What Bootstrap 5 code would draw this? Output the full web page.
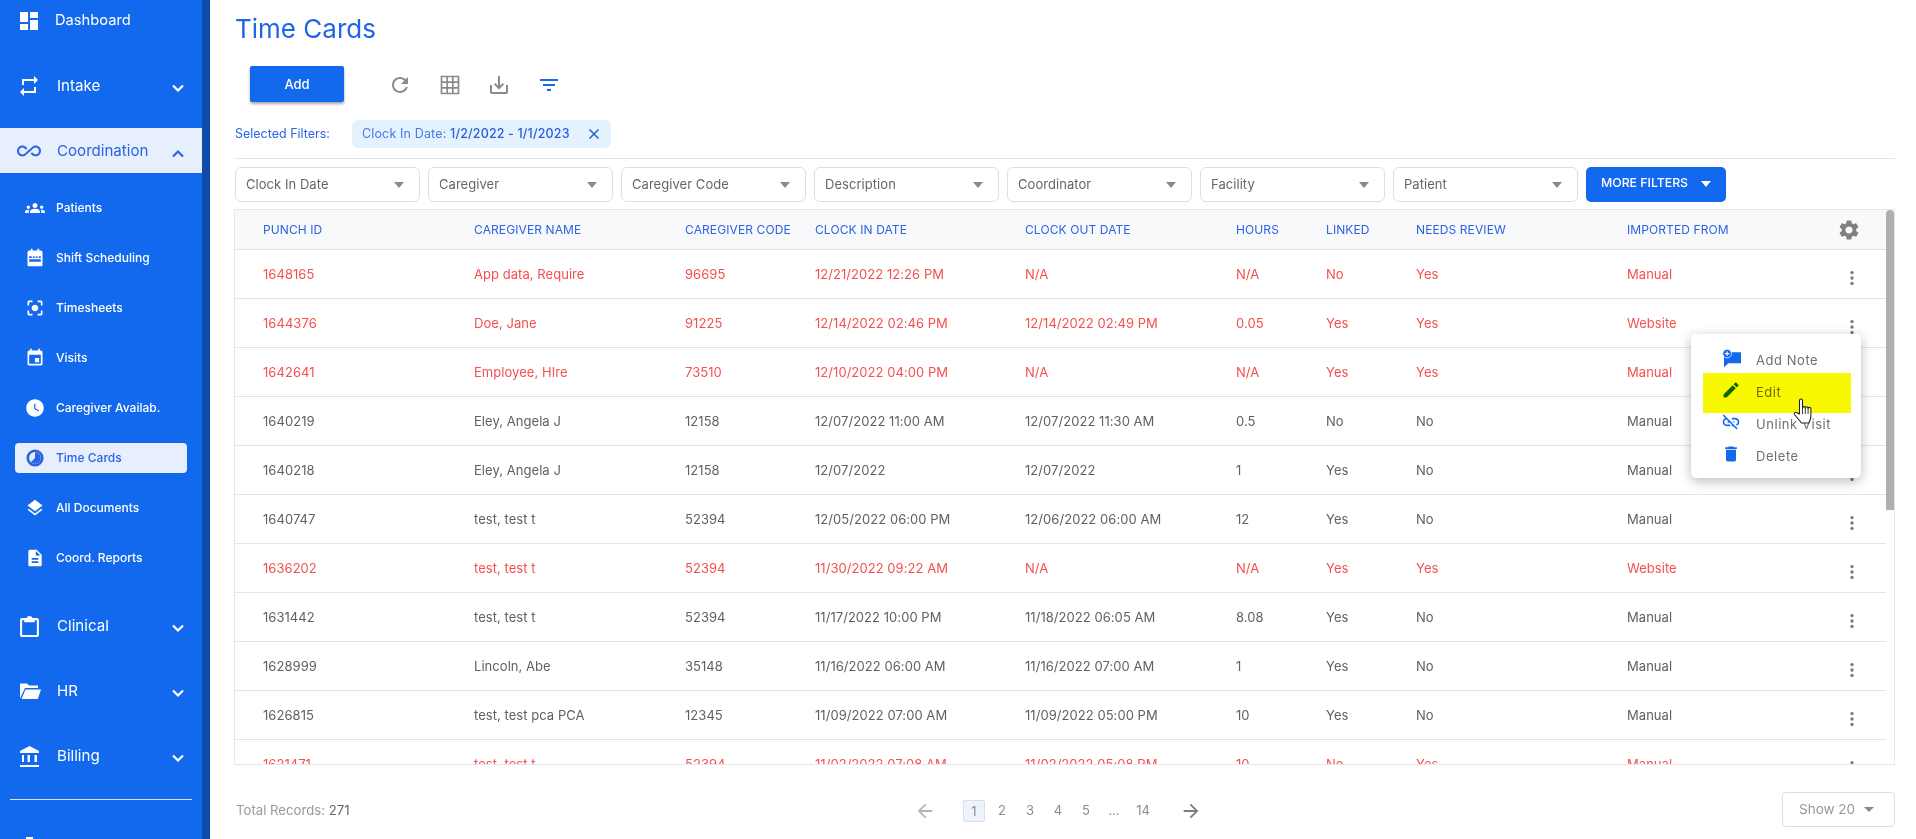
<!DOCTYPE html>
<html lang="en">
<head>
<meta charset="utf-8">
<title>Time Cards</title>
<link href="https://cdn.jsdelivr.net/npm/bootstrap@5.3.0/dist/css/bootstrap.min.css" rel="stylesheet">
<style>
html,body{height:839px;overflow:hidden}
body{font-family:Inter,"Liberation Sans",sans-serif;background:#fff;color:#616161;font-size:13px}
svg{display:block;fill:currentColor}
.side{width:210px;height:839px;flex:none;background:#1269ee;border-right:8px solid #0e4cab;color:#fff;overflow:hidden}
.top-item{height:44px;margin-bottom:21px;display:flex;align-items:center;font-size:15.1px;padding-left:20px;position:relative}
.top-item.dash{height:42px;margin-bottom:22px;font-size:14.7px}
.top-item .lbl{position:absolute;left:57px}
.top-item.dash .lbl{left:55px;margin-top:-1px}
.top-item.on{background:#e7effc;color:#2a63e6;height:45px;margin-top:-1px}
.top-item.on .lbl{margin-top:1px}
.top-item .chev{position:absolute;left:171px;top:17px;width:14px;height:14px;fill:none;stroke:currentColor;stroke-width:2.2}
.top-item.on .chev{top:19px}
.sub-list{margin:-11px 0 21px}
.sub-item{height:50px;display:flex;align-items:center;position:relative;font-size:12px;font-weight:500}
.sub-item .lbl{position:absolute;left:56px}
.sub-item svg{position:absolute;left:25px;width:20px;height:20px}
.sub-item.cur::before{content:"";position:absolute;left:15px;width:172px;top:10px;height:30px;background:#e7effc;border-radius:4px}
.sub-item.cur{color:#2a63e6}
.sub-item.cur svg,.sub-item.cur .lbl{z-index:1}
.side-rule{margin:0 10px;border-top:1px solid #d7e2f8;height:38px}
.tail-ico{margin-left:19px}
.main{flex:1;min-width:0;padding:0 21px 0 25px}
.page-title{height:58px;margin:0;line-height:58px;font-size:26px;font-weight:400;color:#1d66e8}
.tool-row{margin-top:8px;height:36px;padding-left:15px}
.add-btn{width:94px;height:36px;background:#1269ee;border:0;border-radius:2px;color:#fff;font-size:13px;font-weight:500;box-shadow:0 2px 3px rgba(0,0,0,.35);padding:2px 0 0}
.tool-ico{width:24px;height:24px;color:#8b8b8b}
.tool-ico.live{color:#1d66e8}
.tool-set{gap:25.5px;margin:2px 0 0 44px}
.filter-line{margin-top:18px;height:28px}
.filter-name{color:#2a63e6;font-size:12.5px;width:117px}
.chip{height:28px;width:259px;background:#e3f2fd;border-radius:6px;padding:0 11px 0 10px;color:#4b78e4;font-size:12.5px;letter-spacing:.15px}
.chip b{font-weight:500;color:#2a5fd8}
.rule-line{margin-top:10px;border-top:1px solid #e4e4e4}
.filters{margin-top:8px;gap:8px}
.pick{width:185px;height:35px;border:1px solid #dedede;border-radius:6px;padding:1px 15px 0 10px;color:#666;font-size:13px;letter-spacing:.05px}
.tri{width:0;height:0;border-left:5px solid transparent;border-right:5px solid transparent;border-top:6px solid #8a8a8a}
.more-btn{width:140px;height:35px;background:#1269ee;border-radius:5px;color:#fff;font-size:12.3px;font-weight:500;padding:0 15px 2px 15px}
.more-btn .tri{border-top-color:#fff}
.grid-box{margin-top:7px;height:556px;border:1px solid #e7e7e7;position:relative;overflow:hidden;margin-left:-1px}
.grid-table{table-layout:fixed;width:1651px;border-collapse:separate;border-spacing:0;margin:0}
.grid-table th{height:40px;background:#f8f9fb;color:#2d62e3;font-size:12px;font-weight:400;letter-spacing:.1px;border-bottom:1px solid #e2e2e2;padding:0;vertical-align:middle;text-transform:uppercase}
.grid-table td{height:49px;border-bottom:1px solid #e4e4e4;padding:2px 0 0;font-size:13px;letter-spacing:.05px;color:#616161;vertical-align:middle;background:#fff}
.grid-table tr.alert-row td{color:#f64f4f}
.grid-table th:first-child,.grid-table td:first-child{padding-left:28px}
.grid-table .act svg{width:20px;height:20px;color:#77797d;margin:6px 0 0 25px}
.grid-table td.act{color:#77797d}
.grid-table th.act svg{width:24px;height:24px;color:#808080;margin:0 0 0 20px}
.thumb{position:absolute;top:0;right:0;width:8px;height:300px;background:#b0b0b0;border-radius:5px 5px 0 0}
.pop{position:absolute;left:1691px;top:334px;width:170px;height:144px;background:#fff;border-radius:5px;box-shadow:0 3px 12px rgba(0,0,0,.28);padding:10px 0 10px;z-index:3}
.pop-item{height:32px;display:flex;align-items:center;position:relative;color:#6f6f6f;font-size:13px;letter-spacing:.55px;padding:2px 0 0 65px}
.pop-item svg{position:absolute;left:30px;top:4px;width:20px;height:20px;color:#1269ee}
.pop-item svg.note{left:31px;top:5px;width:19px;height:19px}
.mark-on{position:absolute;left:1703px;top:373px;width:148px;height:40px;background:#f8f800;mix-blend-mode:multiply;z-index:4}
.hand{position:absolute;left:1792px;top:397px;width:24px;height:28px;z-index:5}
.foot{margin-top:27px;height:35px;display:grid;grid-template-columns:679px 1fr auto;align-items:center}
.total{color:#9a9a9a;font-size:13.2px;padding:2px 0 0 1px}
.total b{font-weight:400;color:#666}
.pager{color:#8d8d8d;font-size:13px;padding-top:2px}
.pg{width:28px;text-align:center}
.pg-wide{width:30px;text-align:center}
.pg-on{width:22px;height:22px;margin:0 3px 0 0;background:#eef2fb;border:1px solid #d5ddf0;border-radius:2px;line-height:20px;text-align:center;color:#8d8d8d;font-size:13px}
.arr-l{color:#b5b5b5;margin-right:27px}
.arr-r{color:#7c7c7c;margin-left:22px}
.show{width:113px;height:35px;border:1px solid #dedede;border-radius:4px;color:#999;font-size:13.5px;padding:0 20px 0 16px}
.show .tri{border-left-width:5px;border-right-width:5px;border-top-width:5px}
</style>
</head>
<body>
<div class="d-flex position-relative">
  <nav class="side">
    <div class="top-item dash"><svg width="18" height="18" viewBox="3 3 18 18"><path d="M3 13h8V3H3v10zm0 8h8v-6H3v6zm10 0h8V11h-8v10zm0-18v6h8V3h-8z"/></svg><span class="lbl">Dashboard</span></div>
    <div class="top-item"><svg width="20" height="22" viewBox="3 1 18 22" style="margin-left:-1px"><path d="M7 7h10v3l4-4-4-4v3H5v6h2V7zm10 10H7v-3l-4 4 4 4v-3h12v-6h-2v4z"/></svg><span class="lbl">Intake</span><svg class="chev" viewBox="0 0 14 14"><path d="M2 4.5l5 5 5-5"/></svg></div>
    <div class="top-item on"><svg width="24" height="24" viewBox="0 0 24 24" style="margin-left:-3px"><path d="M18.6 6.62c-1.44 0-2.8.56-3.77 1.53L12 10.66 10.48 12h.01L7.8 14.39c-.64.64-1.49.99-2.4.99-1.87 0-3.39-1.51-3.39-3.38S3.53 8.62 5.4 8.62c.91 0 1.76.35 2.44 1.03l1.13 1 1.51-1.34L9.22 8.2C8.2 7.18 6.84 6.62 5.4 6.62 2.42 6.62 0 9.04 0 12s2.42 5.38 5.4 5.38c1.44 0 2.8-.56 3.77-1.53l2.83-2.5.01.01L13.52 12h-.01l2.69-2.39c.64-.64 1.49-.99 2.4-.99 1.87 0 3.39 1.51 3.39 3.38s-1.52 3.38-3.39 3.38c-.9 0-1.76-.35-2.44-1.03l-1.14-1.01-1.51 1.34 1.27 1.12c1.02 1.01 2.37 1.57 3.82 1.57 2.98 0 5.4-2.41 5.4-5.38s-2.42-5.37-5.4-5.37z"/></svg><span class="lbl">Coordination</span><svg class="chev" viewBox="0 0 14 14"><path d="M2 9.5l5-5 5 5"/></svg></div>
    <div class="sub-list">
      <div class="sub-item"><svg viewBox="0 0 24 24"><path d="M12 12.75c1.63 0 3.07.39 4.24.9 1.08.48 1.76 1.56 1.76 2.73V18H6v-1.61c0-1.18.68-2.26 1.76-2.73 1.17-.52 2.61-.91 4.24-.91zM4 13c1.1 0 2-.9 2-2s-.9-2-2-2-2 .9-2 2 .9 2 2 2zm1.13 1.1c-.37-.06-.74-.1-1.13-.1-.99 0-1.93.21-2.78.58C.48 14.9 0 15.62 0 16.43V18h4.5v-1.61c0-.83.23-1.61.63-2.29zM20 13c1.1 0 2-.9 2-2s-.9-2-2-2-2 .9-2 2 .9 2 2 2zm4 3.43c0-.81-.48-1.53-1.22-1.85-.85-.37-1.79-.58-2.78-.58-.39 0-.76.04-1.13.1.4.68.63 1.46.63 2.29V18H24v-1.57zM12 6c1.66 0 3 1.34 3 3s-1.34 3-3 3-3-1.34-3-3 1.34-3 3-3z"/></svg><span class="lbl">Patients</span></div>
      <div class="sub-item"><svg viewBox="0 0 24 24"><path fill-rule="evenodd" d="M5 3h2V1h2v2h6V1h2v2h2c1.1 0 2 .9 2 2v15c0 1.1-.9 2-2 2H5c-1.1 0-2-.9-2-2V5c0-1.1.9-2 2-2zm0 7v2h3v-2H5zm0 3.5v3h14v-3H5zM9.5 10v2h2v-2h-2zm3.5 0v2h2v-2h-2zm3.500 0v2H19v-2h-2.500z"/></svg><span class="lbl">Shift Scheduling</span></div>
      <div class="sub-item"><svg viewBox="0 0 24 24"><path d="M12 8c-2.21 0-4 1.79-4 4s1.79 4 4 4 4-1.79 4-4-1.79-4-4-4zm-7 7H3v4c0 1.1.9 2 2 2h4v-2H5v-4zM5 5h4V3H5c-1.1 0-2 .9-2 2v4h2V5zm14-2h-4v2h4v4h2V5c0-1.1-.9-2-2-2zm0 16h-4v2h4c1.1 0 2-.9 2-2v-4h-2v4z"/></svg><span class="lbl">Timesheets</span></div>
      <div class="sub-item"><svg viewBox="0 0 24 24"><path d="M17 12h-5v5h5v-5zM16 1v2H8V1H6v2H5c-1.11 0-1.99.9-1.99 2L3 19c0 1.1.89 2 2 2h14c1.1 0 2-.9 2-2V5c0-1.1-.9-2-2-2h-1V1h-2zm3 18H5V8h14v11z"/></svg><span class="lbl">Visits</span></div>
      <div class="sub-item"><svg viewBox="0 0 24 24"><path d="M12 1.500C6.200 1.500 1.500 6.200 1.500 12S6.200 22.500 12 22.500 22.500 17.800 22.500 12 17.800 1.500 12 1.500zm4.200 14.700L11 13V7h1.500v5.200l4.500 2.700-.8 1.300z"/></svg><span class="lbl">Caregiver Availab.</span></div>
      <div class="sub-item cur"><svg viewBox="0 0 24 24"><circle cx="12" cy="12" r="8.700" fill="none" stroke="currentColor" stroke-width="3.200"/><path d="M12 5v7l-5 5A7 7 0 1 0 12 5z"/></svg><span class="lbl">Time Cards</span></div>
      <div class="sub-item"><svg viewBox="0 0 24 24"><path d="M11.99 18.540l-7.370-5.730L3 14.070l9 7 9-7-1.630-1.270-7.380 5.740zM12 16l7.360-5.730L21 9l-9-7-9 7 1.630 1.270L12 16z"/></svg><span class="lbl">All Documents</span></div>
      <div class="sub-item"><svg viewBox="0 0 24 24"><path d="M14 2H6c-1.100 0-1.990.9-1.990 2L4 20c0 1.100.89 2 1.990 2H18c1.100 0 2-.9 2-2V8l-6-6zm2 16H8v-2h8v2zm0-4H8v-2h8v2zm-3-5V3.500L18.500 9H13z"/></svg><span class="lbl">Coord. Reports</span></div>
    </div>
    <div class="top-item"><svg width="19" height="21" viewBox="3 1 18 20"><path fill-rule="evenodd" d="M5 3h4.200C9.600 1.800 10.700 1 12 1s2.400.8 2.800 2H19c1.100 0 2 .9 2 2v14c0 1.100-.9 2-2 2H5c-1.100 0-2-.9-2-2V5c0-1.100.9-2 2-2zm0 2v14h14V5h-2v2H7V5H5z"/></svg><span class="lbl">Clinical</span><svg class="chev" viewBox="0 0 14 14"><path d="M2 4.500l5 5 5-5"/></svg></div>
    <div class="top-item"><svg width="22" height="18" viewBox="0 0 22 18" style="margin-left:-1px"><path d="M1 1.500h7l2 2h9v2.500H6L1 16.500zM6.500 7.500H22L18.800 17H2.500z"/></svg><span class="lbl">HR</span><svg class="chev" viewBox="0 0 14 14"><path d="M2 4.500l5 5 5-5"/></svg></div>
    <div class="top-item"><svg width="21" height="21" viewBox="2 1 19 21" style="margin-left:-1px"><path d="M4 10v7h2v-7H4zm5.500 0v7h2.500v-7H9.500zM2 22h19v-2H2v2zm14.500-12v7h2.500v-7h-2.500zM11.500 1L2 6v2h19V6l-9.500-5z"/></svg><span class="lbl">Billing</span><svg class="chev" viewBox="0 0 14 14"><path d="M2 4.500l5 5 5-5"/></svg></div>
    <div class="side-rule"></div>
    <svg class="tail-ico" width="20" height="20" viewBox="0 0 20 20"><path d="M7 0h7v20H7zM2 2h3v18H2zM16 2h3v18h-3z"/></svg>
  </nav>

  <main class="main">
    <h1 class="page-title">Time Cards</h1>
    <div class="tool-row d-flex align-items-center">
      <button class="add-btn btn" type="button">Add</button>
      <div class="tool-set d-flex align-items-center">
        <svg class="tool-ico" viewBox="0 0 24 24"><path d="M17.650 6.350C16.200 4.900 14.210 4 12 4c-4.420 0-7.990 3.580-7.990 8s3.570 8 7.990 8c3.730 0 6.840-2.550 7.730-6h-2.080c-.82 2.330-3.040 4-5.650 4-3.310 0-6-2.690-6-6s2.690-6 6-6c1.660 0 3.140.69 4.220 1.780L13 11h7V4l-2.350 2.350z"/></svg>
        <svg class="tool-ico" viewBox="0 0 24 24"><path fill="none" stroke="currentColor" stroke-width="1.700" d="M3.500 3.500h17v17h-17zM3.500 9.200h17M3.500 14.800h17M9.200 3.500v17M14.800 3.500v17"/></svg>
        <svg class="tool-ico" viewBox="0 0 24 24"><path d="M19 12v7H5v-7H3v7c0 1.100.9 2 2 2h14c1.100 0 2-.9 2-2v-7h-2zm-6 .67l2.590-2.580L17 11.500l-5 5-5-5 1.410-1.410L11 12.670V3h2z"/></svg>
        <svg class="tool-ico live" viewBox="0 0 24 24"><path d="M10 18h4v-2h-4v2zM3 6v2h18V6H3zm3 7h12v-2H6v2z"/></svg>
      </div>
    </div>
    <div class="filter-line d-flex align-items-center">
      <span class="filter-name">Selected Filters:</span>
      <span class="chip d-flex align-items-center justify-content-between"><span>Clock In Date: <b>1/2/2022 - 1/1/2023</b></span><svg width="12" height="12" viewBox="0 0 12 12"><path d="M1.500 1.500l9 9M10.500 1.500l-9 9" stroke="#2a5fd8" stroke-width="1.500"/></svg></span>
    </div>
    <div class="rule-line"></div>
    <div class="filters d-flex">
      <div class="pick d-flex align-items-center justify-content-between"><span>Clock In Date</span><i class="tri"></i></div>
      <div class="pick d-flex align-items-center justify-content-between"><span>Caregiver</span><i class="tri"></i></div>
      <div class="pick d-flex align-items-center justify-content-between"><span>Caregiver Code</span><i class="tri"></i></div>
      <div class="pick d-flex align-items-center justify-content-between"><span>Description</span><i class="tri"></i></div>
      <div class="pick d-flex align-items-center justify-content-between"><span>Coordinator</span><i class="tri"></i></div>
      <div class="pick d-flex align-items-center justify-content-between"><span>Facility</span><i class="tri"></i></div>
      <div class="pick d-flex align-items-center justify-content-between"><span>Patient</span><i class="tri"></i></div>
      <div class="more-btn d-flex align-items-center justify-content-between"><span>MORE FILTERS</span><i class="tri"></i></div>
    </div>
    <div class="grid-box">
      <table class="grid-table">
        <colgroup><col style="width:239px"><col style="width:211px"><col style="width:130px"><col style="width:210px"><col style="width:211px"><col style="width:90px"><col style="width:90px"><col style="width:211px"><col style="width:190px"><col style="width:69px"></colgroup>
        <thead><tr><th>Punch ID</th><th>Caregiver Name</th><th>Caregiver Code</th><th>Clock In Date</th><th>Clock Out Date</th><th>Hours</th><th>Linked</th><th>Needs Review</th><th>Imported From</th><th class="act"><svg viewBox="0 0 24 24"><path d="M19.140 12.940c.04-.3.06-.61.06-.94 0-.32-.02-.64-.07-.94l2.030-1.580c.18-.14.23-.41.12-.61l-1.920-3.320c-.12-.22-.37-.29-.59-.22l-2.390.96c-.5-.38-1.030-.7-1.620-.94l-.36-2.540c-.04-.24-.24-.41-.48-.41h-3.840c-.24 0-.43.17-.47.41l-.36 2.540c-.59.24-1.130.57-1.620.94l-2.390-.96c-.22-.08-.47 0-.59.22L2.740 8.870c-.12.21-.08.47.12.61l2.030 1.580c-.05.3-.09.63-.09.94s.02.64.07.94l-2.030 1.580c-.18.14-.23.41-.12.61l1.920 3.320c.12.22.37.29.59.22l2.390-.96c.5.38 1.030.7 1.620.94l.36 2.540c.05.24.24.41.48.41h3.840c.24 0 .44-.17.47-.41l.36-2.540c.59-.24 1.130-.56 1.620-.94l2.390.96c.22.08.47 0 .59-.22l1.920-3.320c.12-.22.07-.47-.12-.61l-2.010-1.580zM12 15.600c-1.980 0-3.600-1.620-3.600-3.600s1.620-3.600 3.600-3.600 3.600 1.620 3.600 3.600-1.620 3.600-3.600 3.600z"/></svg></th></tr></thead>
        <tbody id="rows"></tbody>
      </table>
      <div class="thumb"></div>
    </div>
    <div class="foot">
      <div class="total">Total Records: <b>271</b></div>
      <div class="pager d-flex align-items-center">
        <svg class="arr-l" width="22" height="22" viewBox="0 0 24 24"><path d="M20 11H7.830l5.590-5.590L12 4l-8 8 8 8 1.410-1.410L7.830 13H20v-2z"/></svg>
        <span class="pg-on">1</span><span class="pg">2</span><span class="pg">3</span><span class="pg">4</span><span class="pg">5</span><span class="pg">...</span><span class="pg-wide">14</span>
        <svg class="arr-r" width="22" height="22" viewBox="0 0 24 24"><path d="M4 11h12.170l-5.590-5.590L12 4l8 8-8 8-1.410-1.410L16.170 13H4v-2z"/></svg>
      </div>
      <div class="show d-flex align-items-center justify-content-between"><span>Show 20</span><i class="tri"></i></div>
    </div>
  </main>

  <div class="pop">
    <div class="pop-item"><svg class="note" viewBox="0 0 24 24"><path d="M2.500 4H24v14H8l-5.500 5z"/><circle cx="6.500" cy="5.800" r="5.500" fill="#1269ee" stroke="#fff" stroke-width="1"/><path d="M6.500 3v5.600M3.700 5.800h5.600" stroke="#fff" stroke-width="1.500"/></svg>Add Note</div>
    <div class="pop-item"><svg viewBox="0 0 24 24"><path d="M3 17.250V21h3.750L17.810 9.940l-3.750-3.750L3 17.250zM20.710 7.040c.39-.39.39-1.020 0-1.410l-2.340-2.340c-.39-.39-1.020-.39-1.410 0l-1.830 1.830 3.750 3.750 1.830-1.830z"/></svg>Edit</div>
    <div class="pop-item"><svg viewBox="0 0 24 24"><path d="M17 7h-4v1.900h4c1.710 0 3.100 1.390 3.100 3.100 0 1.430-.98 2.630-2.310 2.980l1.460 1.460C20.880 15.610 22 13.950 22 12c0-2.760-2.240-5-5-5zm-1 4h-2.190l2 2H16zM2 4.270l3.110 3.110C3.290 8.120 2 9.910 2 12c0 2.760 2.240 5 5 5h4v-1.900H7c-1.710 0-3.100-1.390-3.100-3.100 0-1.590 1.210-2.900 2.760-3.070L8.730 11H8v2h2.730L13 15.270V17h1.730l4.010 4L20 19.740 3.270 3 2 4.270z"/></svg>Unlink Visit</div>
    <div class="pop-item"><svg viewBox="0 0 24 24"><path d="M6 19c0 1.100.9 2 2 2h8c1.100 0 2-.9 2-2V7H6v12zM19 4h-3.500l-1-1h-5l-1 1H5v2h14V4z"/></svg>Delete</div>
  </div>
  <div class="mark-on"></div>
  <svg class="hand" viewBox="0 0 24 28"><path d="M7.500 17V3.500a1.500 1.500 0 0 1 3 0V11a1.400 1.400 0 0 1 2.800 0 1.400 1.400 0 0 1 2.800.5 1.400 1.400 0 0 1 2.800.7V19c0 3-1 5-2 7H9.500c-1.500-2-5-6-7-8.500-1-1.500 1-3 2.500-1.700z" fill="#fff" stroke="#222" stroke-width="1.100" stroke-linejoin="round"/><path d="M10.500 11v6M13.300 11v6M16.100 11.500V17" stroke="#222" stroke-width=".9" fill="none"/></svg>
</div>
<script src="https://cdn.jsdelivr.net/npm/bootstrap@5.3.0/dist/js/bootstrap.bundle.min.js"></script>
<script>
var data=[
[1,"1648165","App data, Require","96695","12/21/2022 12:26 PM","N/A","N/A","No","Yes","Manual"],
[1,"1644376","Doe, Jane","91225","12/14/2022 02:46 PM","12/14/2022 02:49 PM","0.05","Yes","Yes","Website"],
[1,"1642641","Employee, HIre","73510","12/10/2022 04:00 PM","N/A","N/A","Yes","Yes","Manual"],
[0,"1640219","Eley, Angela J","12158","12/07/2022 11:00 AM","12/07/2022 11:30 AM","0.5","No","No","Manual"],
[0,"1640218","Eley, Angela J","12158","12/07/2022","12/07/2022","1","Yes","No","Manual"],
[0,"1640747","test, test t","52394","12/05/2022 06:00 PM","12/06/2022 06:00 AM","12","Yes","No","Manual"],
[1,"1636202","test, test t","52394","11/30/2022 09:22 AM","N/A","N/A","Yes","Yes","Website"],
[0,"1631442","test, test t","52394","11/17/2022 10:00 PM","11/18/2022 06:05 AM","8.08","Yes","No","Manual"],
[0,"1628999","Lincoln, Abe","35148","11/16/2022 06:00 AM","11/16/2022 07:00 AM","1","Yes","No","Manual"],
[0,"1626815","test, test pca PCA","12345","11/09/2022 07:00 AM","11/09/2022 05:00 PM","10","Yes","No","Manual"],
[1,"1621471","test, test t","52394","11/02/2022 07:08 AM","11/02/2022 05:08 PM","10","No","Yes","Manual"]];
var dots='<svg viewBox="0 0 24 24"><circle cx="12" cy="5.500" r="2"/><circle cx="12" cy="12" r="2"/><circle cx="12" cy="18.500" r="2"/></svg>';
document.getElementById('rows').innerHTML=data.map(function(r){
  return '<tr class="'+(r[0]?'alert-row':'')+'">'+r.slice(1).map(function(c){return '<td>'+c+'</td>';}).join('')+'<td class="act">'+dots+'</td></tr>';
}).join('');
</script>
</body>
</html>
